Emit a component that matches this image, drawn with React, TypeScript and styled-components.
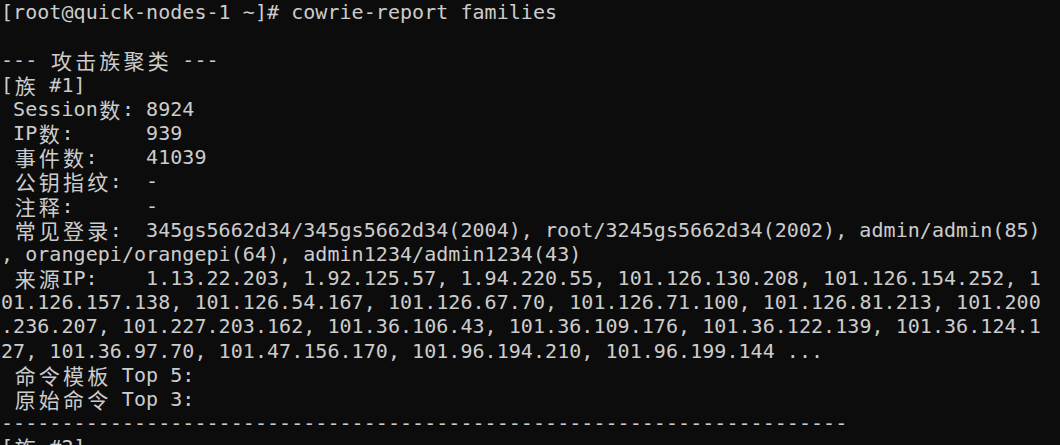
import React from "react";
import styled, { createGlobalStyle } from "styled-components";

const CELL = 12.09;
const ROW = 24.2;

const Global = createGlobalStyle`
  html, body { margin: 0; padding: 0; background: #0c0c0c; }
  body { overflow: hidden; }
`;

const Terminal = styled.div`
  width: 1060px;
  height: 445px;
  background: #0c0c0c;
  color: #cccccc;
  font-family: "DejaVu Sans Mono", "Liberation Mono", monospace;
  font-size: 20px;
  letter-spacing: ${CELL - 20 * 0.60205}px;
  overflow: hidden;
  display: flex;
  flex-direction: column;
  padding: 0 0 0 1px;
  box-sizing: border-box;
`;

const Line = styled.div`
  height: ${ROW}px;
  line-height: ${ROW}px;
  white-space: pre;
  flex: none;
`;

const Wide = styled.span`
  display: inline-block;
  width: ${CELL * 2}px;
  height: ${ROW}px;
  line-height: ${ROW}px;
  vertical-align: top;
  text-align: center;
  letter-spacing: 0;
  font-family: "Noto Sans CJK SC", "Noto Sans CJK JP", sans-serif;
  font-size: 21px;
`;

const isWide = (ch: string) => /[\u2e80-\u9fff\uff00-\uffef\u3000-\u303f]/.test(ch);

function renderLine(text: string) {
  const parts: React.ReactNode[] = [];
  let buf = "";
  let k = 0;
  for (const ch of text) {
    if (isWide(ch)) {
      if (buf) {
        parts.push(<React.Fragment key={k++}>{buf}</React.Fragment>);
        buf = "";
      }
      parts.push(<Wide key={k++}>{ch}</Wide>);
    } else {
      buf += ch;
    }
  }
  if (buf) parts.push(<React.Fragment key={k++}>{buf}</React.Fragment>);
  return parts;
}

const lines: string[] = [
  "[root@quick-nodes-1 ~]# cowrie-report families",
  "",
  "--- 攻击族聚类 ---",
  "[族 #1]",
  " Session数: 8924",
  " IP数:      939",
  " 事件数:    41039",
  " 公钥指纹:  -",
  " 注释:      -",
  " 常见登录:  345gs5662d34/345gs5662d34(2004), root/3245gs5662d34(2002), admin/admin(85)",
  ", orangepi/orangepi(64), admin1234/admin1234(43)",
  " 来源IP:    1.13.22.203, 1.92.125.57, 1.94.220.55, 101.126.130.208, 101.126.154.252, 1",
  "01.126.157.138, 101.126.54.167, 101.126.67.70, 101.126.71.100, 101.126.81.213, 101.200",
  ".236.207, 101.227.203.162, 101.36.106.43, 101.36.109.176, 101.36.122.139, 101.36.124.1",
  "27, 101.36.97.70, 101.47.156.170, 101.96.194.210, 101.96.199.144 ...",
  " 命令模板 Top 5:",
  " 原始命令 Top 3:",
  "-".repeat(70),
  "[族 #2]",
];

export default function App() {
  return (
    <>
      <Global />
      <Terminal>
        {lines.map((l, i) => (
          <Line key={i}>{renderLine(l)}</Line>
        ))}
      </Terminal>
    </>
  );
}
